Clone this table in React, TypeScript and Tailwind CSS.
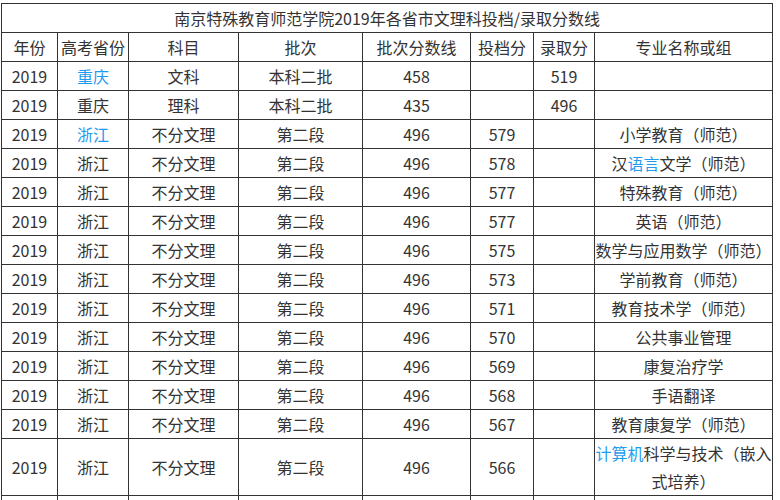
import React from "react";

type Row = {
  y: string;
  p: React.ReactNode;
  k: string;
  b: string;
  s: string;
  t: string;
  l: string;
  m: React.ReactNode;
};

const B = ({ children }: { children: React.ReactNode }) => (
  <span className="text-[#1f9bef]">{children}</span>
);

const rows: Row[] = [
  { y: "2019", p: <B>重庆</B>, k: "文科", b: "本科二批", s: "458", t: "", l: "519", m: "" },
  { y: "2019", p: "重庆", k: "理科", b: "本科二批", s: "435", t: "", l: "496", m: "" },
  { y: "2019", p: <B>浙江</B>, k: "不分文理", b: "第二段", s: "496", t: "579", l: "", m: "小学教育（师范）" },
  { y: "2019", p: "浙江", k: "不分文理", b: "第二段", s: "496", t: "578", l: "", m: <>汉<B>语言</B>文学（师范）</> },
  { y: "2019", p: "浙江", k: "不分文理", b: "第二段", s: "496", t: "577", l: "", m: "特殊教育（师范）" },
  { y: "2019", p: "浙江", k: "不分文理", b: "第二段", s: "496", t: "577", l: "", m: "英语（师范）" },
  { y: "2019", p: "浙江", k: "不分文理", b: "第二段", s: "496", t: "575", l: "", m: "数学与应用数学（师范）" },
  { y: "2019", p: "浙江", k: "不分文理", b: "第二段", s: "496", t: "573", l: "", m: "学前教育（师范）" },
  { y: "2019", p: "浙江", k: "不分文理", b: "第二段", s: "496", t: "571", l: "", m: "教育技术学（师范）" },
  { y: "2019", p: "浙江", k: "不分文理", b: "第二段", s: "496", t: "570", l: "", m: "公共事业管理" },
  { y: "2019", p: "浙江", k: "不分文理", b: "第二段", s: "496", t: "569", l: "", m: "康复治疗学" },
  { y: "2019", p: "浙江", k: "不分文理", b: "第二段", s: "496", t: "568", l: "", m: "手语翻译" },
  { y: "2019", p: "浙江", k: "不分文理", b: "第二段", s: "496", t: "567", l: "", m: "教育康复学（师范）" },
  { y: "2019", p: "浙江", k: "不分文理", b: "第二段", s: "496", t: "566", l: "", m: <><B>计算机</B>科学与技术（嵌入式培养）</> },
];

const td = "border border-[#333] p-0 text-center align-middle leading-[28px]";

export default function App() {
  return (
    <div
      className="bg-white text-[#333] text-[16px] w-[780px] h-[500px] overflow-hidden pt-[3px] pl-[1px]"
      style={{ fontFamily: '"Noto Sans CJK SC", "Noto Sans", sans-serif' }}
    >
      <table className="table-fixed border-collapse w-[771px]">
        <colgroup>
          <col className="w-[56px]" />
          <col className="w-[71px]" />
          <col className="w-[110px]" />
          <col className="w-[124px]" />
          <col className="w-[108px]" />
          <col className="w-[63px]" />
          <col className="w-[61px]" />
          <col className="w-[178px]" />
        </colgroup>
        <tbody>
          <tr>
            <td className={td} colSpan={8}>
              南京特殊教育师范学院2019年各省市文理科投档/录取分数线
            </td>
          </tr>
          <tr>
            <td className={td}>年份</td>
            <td className={td}>高考省份</td>
            <td className={td}>科目</td>
            <td className={td}>批次</td>
            <td className={td}>批次分数线</td>
            <td className={td}>投档分</td>
            <td className={td}>录取分</td>
            <td className={td}>专业名称或组</td>
          </tr>
          {rows.map((r, i) => (
            <tr key={i}>
              <td className={td}>{r.y}</td>
              <td className={td}>{r.p}</td>
              <td className={td}>{r.k}</td>
              <td className={td}>{r.b}</td>
              <td className={td}>{r.s}</td>
              <td className={td}>{r.t}</td>
              <td className={td}>{r.l}</td>
              <td className={td}>{r.m}</td>
            </tr>
          ))}
          <tr>
            <td className={`${td} h-[29px]`}></td>
            <td className={td}></td>
            <td className={td}></td>
            <td className={td}></td>
            <td className={td}></td>
            <td className={td}></td>
            <td className={td}></td>
            <td className={td}></td>
          </tr>
        </tbody>
      </table>
    </div>
  );
}
